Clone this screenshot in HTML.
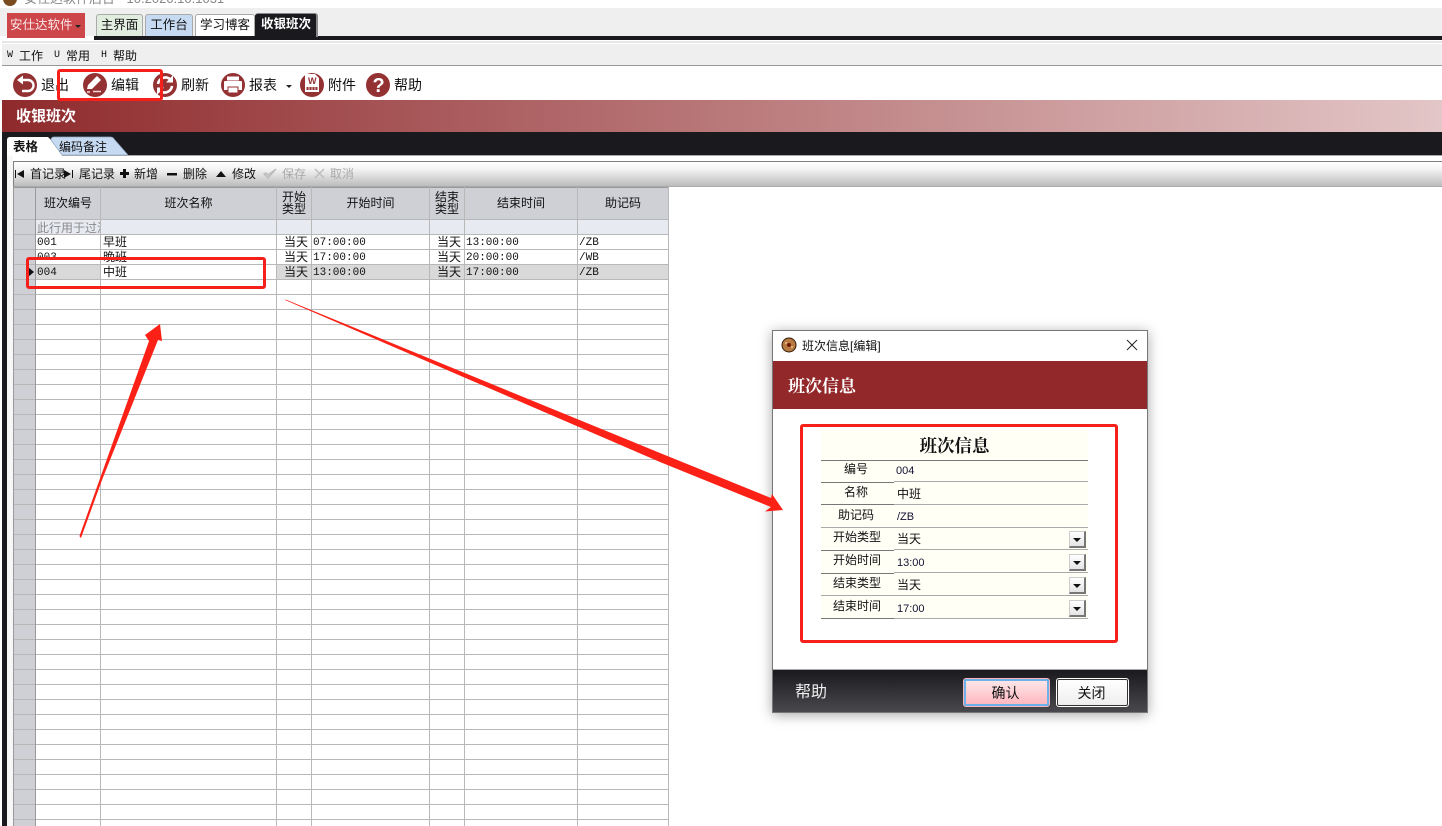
<!DOCTYPE html>
<html lang="zh"><head><meta charset="utf-8"><title>收银班次</title>
<style>
html,body{margin:0;padding:0;background:#fff}
body{position:relative;width:1442px;height:826px;overflow:hidden;font-family:"WenQuanYi Zen Hei","Liberation Sans","Noto Sans CJK SC",sans-serif;font-size:12px;color:#111}
div,span,svg{position:absolute}
.t{white-space:nowrap;line-height:16px;height:16px}
.c{text-align:center}
.m{font-family:"Liberation Mono","WenQuanYi Zen Hei",monospace;font-size:11px;margin-top:1px}
.b14{font-size:14px}
.v{width:1px;background:#b8b8b8}
.gl{height:1px;left:821px;width:73px;background:#777}
.gr{height:1px;left:894px;width:194px;background:#aaa}
.dd{left:1069px;width:17px;height:17px;box-sizing:border-box;background:linear-gradient(#fff,#e4e4e4);border:1px solid #ccc;border-right:2px solid #777;border-bottom:2px solid #777}
.dd:after{content:"";position:absolute;left:3px;top:6px;border:4px solid transparent;border-top:4px solid #111;border-bottom:0}
.red{box-sizing:border-box;border:3px solid #f5201a;border-radius:3px}
.g{color:#aaa}
</style></head><body>
<!-- top window chrome -->
<div class="t" style="left:24px;top:-9px;color:#888;font-size:13px;height:17px;overflow:hidden">安仕达软件后台 - 10.2020.10.1031</div>
<div style="left:3px;top:-8px;width:14px;height:14px;border-radius:7px;background:#7a4a20"></div>
<div style="left:0;top:8px;width:1442px;height:28px;background:#efefef"></div>
<div style="left:7px;top:13px;width:78px;height:25px;background:#cc464a"></div>
<div class="t" style="left:10px;top:17px;color:#fbe9e9;font-size:12.500px">安仕达软件</div>
<div style="left:75px;top:25px;border:3px solid transparent;border-top:3px solid #222;border-bottom:0"></div>
<div style="left:94px;top:36px;width:1348px;height:4px;background:#1a191e"></div>
<div style="left:96px;top:14px;width:47px;height:22px;box-sizing:border-box;background:#e1eddf;border:1px solid #aaa;border-bottom:0;border-radius:3px 3px 0 0"></div>
<div class="t c" style="left:96px;top:17px;width:47px;font-size:12.500px">主界面</div>
<div style="left:145px;top:14px;width:48px;height:22px;box-sizing:border-box;background:#c6daf2;border:1px solid #aaa;border-bottom:0;border-radius:3px 3px 0 0"></div>
<div class="t c" style="left:145px;top:17px;width:48px;font-size:12.500px">工作台</div>
<div style="left:195px;top:14px;width:60px;height:22px;box-sizing:border-box;background:#fff;border:1px solid #aaa;border-bottom:0;border-radius:3px 3px 0 0"></div>
<div class="t c" style="left:195px;top:17px;width:60px;font-size:12.500px">学习博客</div>
<div style="left:255px;top:13px;width:63px;height:24px;box-sizing:border-box;background:#1a191e;border-right:2px solid #888;border-top:1px solid #888;border-radius:3px 3px 0 0"></div>
<div class="t c" style="left:255px;top:16px;width:62px;color:#fff;font-size:12.500px;font-weight:bold">收银班次</div>
<!-- menu -->
<div style="left:2px;top:44px;width:1440px;height:21px;background:#efefef;border-bottom:1px solid #999"></div>
<div style="left:2px;top:41px;width:1440px;height:2px;background:#e6e6e6"></div>
<div class="t m" style="left:7px;top:48px;font-size:10px;margin-top:0">W</div><div class="t" style="left:19px;top:48px">工作</div>
<div class="t m" style="left:54px;top:48px;font-size:10px;margin-top:0">U</div><div class="t" style="left:66px;top:48px">常用</div>
<div class="t m" style="left:101px;top:48px;font-size:10px;margin-top:0">H</div><div class="t" style="left:113px;top:48px">帮助</div>
<!-- main toolbar -->
<svg style="left:0;top:66px" width="420" height="34" viewBox="0 66 420 34">
<g fill="#943133">
<circle cx="25" cy="85" r="12"/><circle cx="95" cy="85" r="12"/><circle cx="165" cy="85" r="12"/><circle cx="233" cy="85" r="12"/><circle cx="312" cy="85" r="12"/><circle cx="378" cy="85" r="12"/></g>
<path d="M21 80h7a5.500 5.500 0 0 1 0 11h-6" fill="none" stroke="#fff" stroke-width="2.400"/><path d="M23 75.500l-6 4.500 6 4.500z" fill="#fff"/>
<path d="M87 89l1-4 9-9 4 4-9 9z" fill="#fff"/><path d="M87 92h3" stroke="#f3d9d9" stroke-width="1.500"/><path d="M93 91.500h8" stroke="#f3d9d9" stroke-width="1.500"/>
<path d="M158 84a7.500 7.500 0 0 1 12-5M172 86a7.500 7.500 0 0 1-12 5" fill="none" stroke="#fff" stroke-width="2.600"/><path d="M173 75v7.500h-7zM157 95v-7.500h7z" fill="#fff"/>
<path d="M227 76.500h12v4h-12z" fill="#fff"/><path d="M224 82q0-1 1-1h16q1 0 1 1v8h-18z" fill="#fff"/><path d="M228 87h10v6h-10z" fill="#fff" stroke="#943133"/>
<path d="M305 74h10l4 4v14h-14z" fill="#fff"/><text x="308" y="84" font-size="9" font-weight="bold" fill="#943133" font-family="Liberation Sans">W</text><path d="M306.500 87h11v3h-11z" fill="#943133"/><path d="M309 87v3M312 87v3M315 87v3" stroke="#fff" stroke-width=".8"/>
<text x="372.500" y="92" font-size="20" font-weight="bold" fill="#fff" font-family="Liberation Sans">?</text>
</svg>
<div class="t b14" style="left:41px;top:77px">退出</div>
<div class="t b14" style="left:111px;top:77px">编辑</div>
<div class="t b14" style="left:181px;top:77px">刷新</div>
<div class="t b14" style="left:249px;top:77px">报表</div>
<div style="left:286px;top:85px;border:3px solid transparent;border-top:3px solid #222;border-bottom:0"></div>
<div class="t b14" style="left:328px;top:77px">附件</div>
<div class="t b14" style="left:394px;top:77px">帮助</div>
<!-- banner -->
<div style="left:2px;top:100px;width:1440px;height:32px;background:linear-gradient(90deg,#8f2a2c,#e3c6c7)"></div>
<div class="t" style="left:16px;top:109px;color:#fff;font-size:15px;font-weight:bold">收银班次</div>
<div style="left:2px;top:132px;width:1440px;height:23px;background:#1a191e"></div>
<div style="left:2px;top:155px;width:5px;height:671px;background:#1a191e"></div>
<div style="left:7px;top:155px;width:1435px;height:1px;background:#aaa"></div>
<div style="left:7px;top:156px;width:6px;height:670px;background:#f7f7f7"></div>
<svg style="left:0;top:132px" width="140" height="24" viewBox="0 132 140 24">
<path d="M62 155l-11-15-3-3h-38q-3 0-3 3v16h55z" fill="#fff"/>
<path d="M62 155l-11-15q0-3 3-3h56q3 0 4 2l14 16z" fill="#c6daf2" stroke="#8fa7c0" stroke-width=".7"/>
</svg>
<div class="t" style="left:13px;top:139px;font-weight:bold;font-size:12.500px">表格</div>
<div class="t" style="left:59px;top:139px">编码备注</div>
<!-- record toolbar -->
<div style="left:13px;top:161px;width:1429px;height:26px;box-sizing:border-box;border-top:1px solid #808080;border-left:1px solid #808080;border-bottom:1px solid #aaa;background:linear-gradient(#fff,#f3f3f3 30%,#bcbcbc)"></div>
<svg style="left:13px;top:166px" width="350" height="16" viewBox="13 166 350 16">
<path d="M15 170v8h1v-8zM24 170v8l-7-4zM73 170v8h-1v-8zM64 170v8l7-4zM120 172h3v-3h3v3h3v3h-3v3h-3v-3h-3zM167 173h10v2.500h-10zM216 177l5-6 5 6z" fill="#111"/>
<path d="M264 174l4 4 8-9-8 6-2-2zM315 169l9 9M324 169l-9 9" fill="#d4d4d4" stroke="#bbb" stroke-width="1.300"/>
</svg>
<div class="t" style="left:30px;top:166px">首记录</div>
<div class="t" style="left:79px;top:166px">尾记录</div>
<div class="t" style="left:134px;top:166px">新增</div>
<div class="t" style="left:183px;top:166px">删除</div>
<div class="t" style="left:232px;top:166px">修改</div>
<div class="t g" style="left:282px;top:166px">保存</div>
<div class="t g" style="left:330px;top:166px">取消</div>
<!-- grid -->
<div style="left:13px;top:187px;width:655px;height:32px;background:#cfd0d6"></div>
<div style="left:13px;top:219px;width:23px;height:607px;background:#cfd0d6"></div>
<div style="left:36px;top:220px;width:632px;height:14px;background:#e7eaf0"></div>
<div style="left:36px;top:265px;width:64px;height:14px;background:#d9d9d9"></div>
<div style="left:277px;top:265px;width:391px;height:14px;background:#d9d9d9"></div>
<div style="left:13px;top:219px;width:656px;height:607px;background:repeating-linear-gradient(180deg,#b8b8b8 0,#b8b8b8 1px,transparent 1px,transparent 15px)"></div>
<div style="left:13px;top:187px;width:656px;height:1px;background:#999"></div>
<div style="left:13px;top:187px;width:1px;height:639px;background:#999"></div>
<div class="v" style="left:35px;top:187px;height:639px;background:#999"></div>
<div class="v" style="left:100px;top:187px;height:639px"></div>
<div class="v" style="left:276px;top:187px;height:639px"></div>
<div class="v" style="left:311px;top:187px;height:639px"></div>
<div class="v" style="left:429px;top:187px;height:639px"></div>
<div class="v" style="left:464px;top:187px;height:639px"></div>
<div class="v" style="left:577px;top:187px;height:639px"></div>
<div class="v" style="left:668px;top:187px;height:639px"></div>
<div class="t c" style="left:36px;top:195px;width:64px">班次编号</div>
<div class="t c" style="left:101px;top:195px;width:175px">班次名称</div>
<div class="t c" style="left:277px;top:191px;width:34px;line-height:12px">开始</div>
<div class="t c" style="left:277px;top:203px;width:34px;line-height:12px">类型</div>
<div class="t c" style="left:312px;top:195px;width:117px">开始时间</div>
<div class="t c" style="left:430px;top:191px;width:34px;line-height:12px">结束</div>
<div class="t c" style="left:430px;top:203px;width:34px;line-height:12px">类型</div>
<div class="t c" style="left:465px;top:195px;width:112px">结束时间</div>
<div class="t c" style="left:578px;top:195px;width:90px">助记码</div>
<div class="t" style="left:37px;top:220px;color:#8a8a8a;width:63px;overflow:hidden">此行用于过滤</div>
<div class="t m" style="left:37px;top:234px">001</div><div class="t" style="left:103px;top:234px">早班</div><div class="t" style="left:284px;top:234px">当天</div><div class="t m" style="left:313px;top:234px">07:00:00</div><div class="t" style="left:437px;top:234px">当天</div><div class="t m" style="left:466px;top:234px">13:00:00</div><div class="t m" style="left:579px;top:234px">/ZB</div>
<div class="t m" style="left:37px;top:249px">003</div><div class="t" style="left:103px;top:249px">晚班</div><div class="t" style="left:284px;top:249px">当天</div><div class="t m" style="left:313px;top:249px">17:00:00</div><div class="t" style="left:437px;top:249px">当天</div><div class="t m" style="left:466px;top:249px">20:00:00</div><div class="t m" style="left:579px;top:249px">/WB</div>
<div class="t m" style="left:37px;top:264px">004</div><div class="t" style="left:103px;top:264px">中班</div><div class="t" style="left:284px;top:264px">当天</div><div class="t m" style="left:313px;top:264px">13:00:00</div><div class="t" style="left:437px;top:264px">当天</div><div class="t m" style="left:466px;top:264px">17:00:00</div><div class="t m" style="left:579px;top:264px">/ZB</div>
<div style="left:28px;top:267px;border:5px solid transparent;border-left:6px solid #111;border-right:0"></div>
<!-- dialog -->
<div style="left:772px;top:330px;width:376px;height:383px;box-sizing:border-box;background:#fff;border:1px solid #777;box-shadow:0 2px 12px rgba(0,0,0,.35)"></div>
<svg style="left:781px;top:337px" width="16" height="16" viewBox="0 0 16 16"><circle cx="8" cy="8" r="7.500" fill="#2e1a08"/><circle cx="8" cy="8" r="6.500" fill="#b87a40"/><circle cx="5" cy="6" r="1" fill="#e6c090"/><circle cx="11" cy="10" r="1" fill="#e6c090"/><circle cx="8" cy="8" r="2" fill="#6d1a08"/></svg>
<div class="t" style="left:802px;top:338px">班次信息[编辑]</div>
<svg style="left:1126px;top:339px" width="13" height="13"><path d="M1 1l10 10M11 1L1 11" stroke="#222" fill="none"/></svg>
<div style="left:773px;top:361px;width:374px;height:48px;background:#922829"></div>
<div class="t" style="left:788px;top:375px;height:20px;line-height:20px;color:#fff;font-size:17px;font-weight:bold;font-family:'Noto Serif CJK SC','WenQuanYi Zen Hei',serif">班次信息</div>
<div style="left:821px;top:430px;width:267px;height:188px;background:#fffff6"></div>
<div class="t c" style="left:821px;top:435px;width:267px;height:22px;line-height:22px;font-size:17.500px;font-weight:bold;font-family:'Noto Serif CJK SC','WenQuanYi Zen Hei',serif">班次信息</div>
<div class="gl" style="top:460px;width:267px"></div>
<div class="gl" style="top:482px"></div><div class="gr" style="top:481px"></div>
<div class="gl" style="top:504px"></div><div class="gr" style="top:504px"></div>
<div class="gl" style="top:527px;width:267px;background:#aaa"></div>
<div class="gl" style="top:550px"></div><div class="gr" style="top:549px"></div>
<div class="gl" style="top:573px"></div><div class="gr" style="top:572px"></div>
<div class="gl" style="top:595px;width:267px;background:#aaa"></div>
<div class="gl" style="top:618px"></div><div class="gr" style="top:618px"></div>
<div class="t c" style="left:821px;top:461px;width:70px">编号</div>
<div class="t c" style="left:821px;top:484px;width:70px">名称</div>
<div class="t c" style="left:821px;top:507px;width:70px">助记码</div>
<div class="t c" style="left:822px;top:529px;width:70px">开始类型</div>
<div class="t c" style="left:822px;top:552px;width:70px">开始时间</div>
<div class="t c" style="left:822px;top:575px;width:70px">结束类型</div>
<div class="t c" style="left:822px;top:598px;width:70px">结束时间</div>
<div class="t" style="left:896px;top:463px;font-size:11px;font-family:'Liberation Sans';color:#113">004</div>
<div class="t" style="left:897px;top:486px">中班</div>
<div class="t" style="left:897px;top:509px;font-size:11px;font-family:'Liberation Sans';color:#113">/ZB</div>
<div class="t" style="left:897px;top:531px">当天</div>
<div class="t" style="left:897px;top:555px;font-size:11px;font-family:'Liberation Sans';color:#113">13:00</div>
<div class="t" style="left:897px;top:577px">当天</div>
<div class="t" style="left:897px;top:601px;font-size:11px;font-family:'Liberation Sans';color:#113">17:00</div>
<div class="dd" style="top:531px"></div><div class="dd" style="top:554px"></div><div class="dd" style="top:577px"></div><div class="dd" style="top:600px"></div>
<div style="left:773px;top:669px;width:374px;height:1px;background:#aaa"></div>
<div style="left:773px;top:670px;width:374px;height:42px;background:linear-gradient(#1a191e,#48484d)"></div>
<div class="t" style="left:795px;top:685px;color:#eee;font-size:16px">帮助</div>
<div style="left:964px;top:679px;width:85px;height:27px;box-sizing:border-box;background:linear-gradient(#fbe6e8,#ffb8c0);border:2px solid #6db0ea;outline:1px solid #f2b8bc;border-radius:2px"></div>
<div class="t c" style="left:963px;top:685px;width:85px;font-size:14px">确认</div>
<div style="left:1057px;top:679px;width:71px;height:27px;box-sizing:border-box;background:linear-gradient(#fff,#eee);border:1px solid #333;outline:1px solid #fff;border-radius:2px"></div>
<div class="t c" style="left:1056px;top:685px;width:71px;font-size:14px">关闭</div>
<!-- annotations -->
<div class="red" style="left:57px;top:69px;width:106px;height:32px"></div>
<div class="red" style="left:26px;top:257px;width:240px;height:32px"></div>
<div class="red" style="left:800px;top:424px;width:318px;height:219px"></div>
<svg style="left:0;top:0" width="1442" height="826">
<path d="M80 537L79.500 536 149 341 145 335 160 324 162 341 158 340 102 480 81 538Z" fill="#fb2116"/>
<path d="M285 300L285.500 299.500 660 453 771 498 772 494 783 510 765 511.500 771 507 660 462Z" fill="#fb2116"/>
</svg>
</body></html>
